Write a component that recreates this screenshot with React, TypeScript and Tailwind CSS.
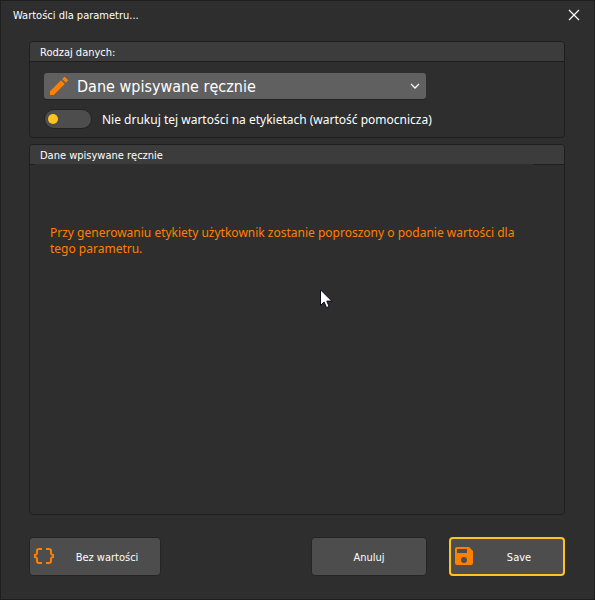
import type { ReactNode } from 'react';

function Panel({ title, grow, children }: { title: string; grow?: boolean; children: ReactNode }) {
  return (
    <section
      className={`flex flex-col overflow-hidden rounded-[4px] border border-[#1e1e1e] ${grow ? 'grow' : ''}`}
    >
      <h2
        className={`flex shrink-0 items-center bg-[#3c3c3c] px-[10px] pt-[2px] text-[11px] leading-4 ${
          grow ? 'h-[19px]' : 'h-5 border-b border-[#1e1e1e]'
        }`}
      >
        {title}
      </h2>
      {grow && (
        <div className="flex h-px shrink-0 justify-between">
          <span className="w-1 bg-[#1e1e1e]" />
          <span className="w-[30px] bg-[#1e1e1e]" />
        </div>
      )}
      {children}
    </section>
  );
}

function PencilIcon() {
  return (
    <svg className="pointer-events-none absolute top-1 left-[6px] size-[18px]" viewBox="0 0 18 18" fill="#ff8000" aria-hidden="true">
      <path d="M0 14.25V18h3.75L14.81 6.94l-3.75-3.75L0 14.25zM17.71 4.04a1 1 0 0 0 0-1.41L15.37.29a1 1 0 0 0-1.41 0l-1.83 1.83 3.75 3.75 1.83-1.83z" />
    </svg>
  );
}

function BracesIcon() {
  return (
    <svg className="-mt-[3px] h-4 w-5" viewBox="0 0 20 16" fill="#ff8000" aria-hidden="true">
      <path d="M2 5a1 1 0 0 1-1 1H0v4h1a1 1 0 0 1 1 1v2a3 3 0 0 0 3 3h3v-2H5a1 1 0 0 1-1-1v-2a3 3 0 0 0-2-2.83v-.34A3 3 0 0 0 4 5V3a1 1 0 0 1 1-1h3V0H5a3 3 0 0 0-3 3v2zM18 5V3a3 3 0 0 0-3-3h-3v2h3a1 1 0 0 1 1 1v2a3 3 0 0 0 2 2.83v.34A3 3 0 0 0 16 11v2a1 1 0 0 1-1 1h-3v2h3a3 3 0 0 0 3-3v-2a1 1 0 0 1 1-1h1V6h-1a1 1 0 0 1-1-1z" />
    </svg>
  );
}

function SaveIcon() {
  return (
    <svg className="-mt-[3px] size-[18px]" viewBox="0 0 18 18" fill="#ff8000" aria-hidden="true">
      <path
        fillRule="evenodd"
        d="M14 0H2a2 2 0 0 0-2 2v14a2 2 0 0 0 2 2h14a2 2 0 0 0 2-2V4l-4-4zM9 16a3 3 0 1 1 0-6 3 3 0 0 1 0 6zM12 6H2V2h10v4z"
      />
    </svg>
  );
}

const buttonBase =
  'flex h-[39px] items-center rounded-[4px] bg-[#4d4d4d] pt-[2px] text-[11px] leading-4';

export default function App() {
  return (
    <div className="relative flex min-h-screen flex-col border border-[#1e1e1e] bg-[#2e2e2e] font-['DejaVu_Sans_Condensed','DejaVu_Sans',sans-serif] [font-stretch:condensed] text-white">
      <header className="flex h-7 items-center justify-between pr-[14px] pl-3">
        <h1 className="pt-[2px] text-[11px] leading-4">Wartości dla parametru...</h1>
        <button type="button" aria-label="Zamknij">
          <svg className="size-3" viewBox="0 0 12 12" fill="none" stroke="#fff" strokeWidth="1.2" aria-hidden="true">
            <path d="M1 1l10 10M11 1L1 11" />
          </svg>
        </button>
      </header>

      <main className="flex grow flex-col gap-[6px] px-7 pt-3 pr-[29px]">
        <Panel title="Rodzaj danych:">
          <div className="flex flex-col gap-[10px] px-[14px] pt-[11px] pb-2">
            <div className="relative w-[382px] max-w-full">
              <PencilIcon />
              <select
                aria-label="Rodzaj danych"
                className="block h-[26px] w-full appearance-none rounded-[3px] bg-[#606060] pt-[2px] pr-6 pl-[33px] text-[16px] leading-6 shadow-[0_1px_0_#222222]"
              >
                <option>Dane wpisywane ręcznie</option>
              </select>
              <svg className="pointer-events-none absolute top-[10px] right-[6px] h-[6px] w-[10px]" viewBox="0 0 10 6" fill="none" stroke="#fff" strokeWidth="1.3" aria-hidden="true">
                <path d="M1 1l4 4 4-4" />
              </svg>
            </div>
            <label className="flex h-5 items-center gap-[10px] font-['Noto_Sans',sans-serif] text-[12px] leading-4">
              <input
                type="checkbox"
                className="h-5 w-12 shrink-0 appearance-none rounded-full border border-[#222222] bg-[#4d4d4d] before:mt-1 before:ml-[3px] before:block before:size-[10px] before:rounded-full before:bg-[#ffc320] before:content-[''] checked:before:ml-[33px]"
              />
              <span className="pt-[2px]">Nie drukuj tej wartości na etykietach (wartość pomocnicza)</span>
            </label>
          </div>
        </Panel>

        <Panel title="Dane wpisywane ręcznie" grow>
          <p className="pt-[60px] pr-10 pl-5 font-['Noto_Sans',sans-serif] text-[12px] leading-4 text-[#ff8000]">
            Przy generowaniu etykiety użytkownik zostanie poproszony o podanie wartości dla tego parametru.
          </p>
        </Panel>
      </main>

      <footer className="flex pt-[22px] pr-[29px] pb-[23px] pl-7">
        <button type="button" className={`${buttonBase} w-[132px] border border-[#242424] pl-1`}>
          <BracesIcon />
          <span className="grow text-center">Bez wartości</span>
        </button>
        <button type="button" className={`${buttonBase} ml-auto w-[116px] justify-center border border-[#242424]`}>
          Anuluj
        </button>
        <button type="button" className={`${buttonBase} ml-[22px] w-[116px] border-2 border-[#ffc320] pl-1`}>
          <SaveIcon />
          <span className="grow pl-[2px] text-center">Save</span>
        </button>
      </footer>

      <svg className="pointer-events-none absolute top-[288px] left-[319px] h-[20px] w-[13px]" viewBox="0 0 13 20" aria-hidden="true">
        <path d="M.5.8v15.7l3.6-3.5 2.4 5.6 2.6-1.1-2.3-5.4h5z" fill="#fff" stroke="#0a0a1e" />
      </svg>
    </div>
  );
}
